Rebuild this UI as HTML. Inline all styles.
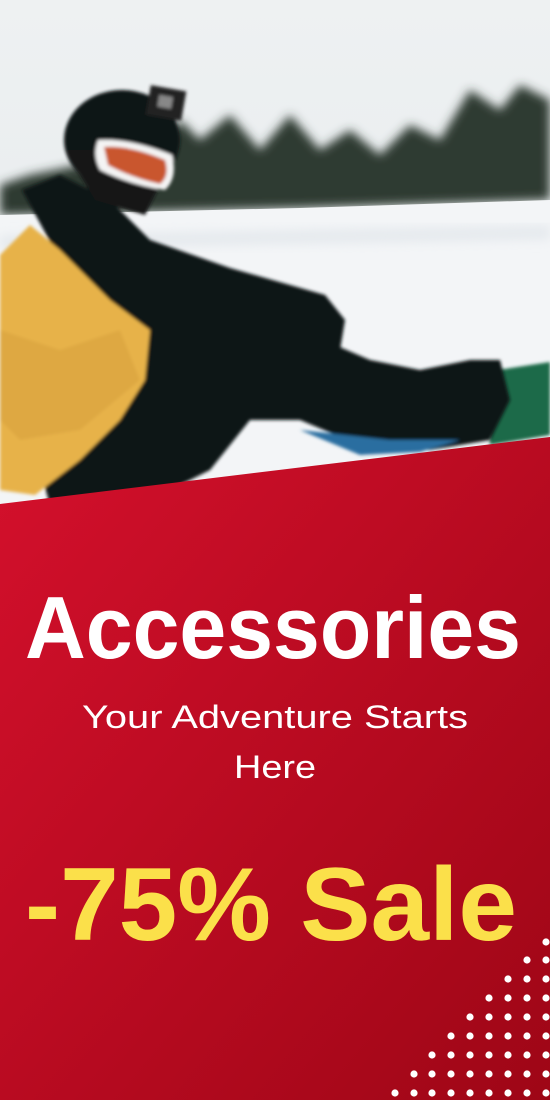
<!DOCTYPE html>
<html><head><meta charset="utf-8"><style>
html,body{margin:0;padding:0;width:550px;height:1100px;overflow:hidden;background:#fff}
svg{display:block}
</style></head><body>
<svg width="550" height="1100" viewBox="0 0 550 1100" xmlns="http://www.w3.org/2000/svg">
<defs>
<linearGradient id="sky" x1="0" y1="0" x2="0" y2="1">
<stop offset="0" stop-color="#eef1f2"/><stop offset="1" stop-color="#e4e9ec"/></linearGradient>
<linearGradient id="red" x1="0" y1="0" x2="1" y2="1">
<stop offset="0" stop-color="#d4102c"/><stop offset="1" stop-color="#9e0616"/></linearGradient>
<filter id="bl"><feGaussianBlur stdDeviation="5"/></filter>
<filter id="bl2"><feGaussianBlur stdDeviation="1.5"/></filter>
</defs>
<rect width="550" height="520" fill="url(#sky)"/>
<g filter="url(#bl)" fill="#2f3b30">
<path d="M0 212 L0 185 L30 175 L80 165 L140 170 L180 120 L200 140 L230 115 L260 150 L290 115 L320 150 L350 130 L380 155 L410 125 L440 140 L470 90 L500 110 L520 85 L550 100 L550 200 L300 208 L0 215 Z"/>
</g>
<path d="M0 215 L300 208 L550 200 L550 520 L0 520 Z" fill="#f3f5f7"/>
<path d="M0 235 L550 225 L550 240 L0 250 Z" fill="#e6eaee" filter="url(#bl)"/>
<path d="M485 372 L550 362 L550 435 L490 445 Z" fill="#1f6a4a" filter="url(#bl2)"/>
<g filter="url(#bl2)">
<!-- pants -->
<path d="M130 330 L240 310 L300 330 L370 360 L420 370 L470 360 L500 360 L510 400 L490 440 L430 450 L360 445 L300 420 L250 420 L210 470 L150 500 L50 505 L40 470 L70 380 Z" fill="#111416"/>
<path d="M300 430 L390 440 L460 440 L420 452 L360 455 Z" fill="#2a6ea0"/>
<!-- black arm/jacket -->
<path d="M22 190 L60 175 L110 200 L150 240 L230 268 L290 285 L325 295 L345 320 L340 350 L320 352 L280 330 L200 322 L150 330 L120 320 L60 260 Z" fill="#0f1214"/>
<!-- yellow jacket -->
<path d="M0 255 L30 225 L60 250 L110 300 L150 330 L145 380 L120 420 L80 460 L35 495 L0 490 Z" fill="#e7b24a"/>
<path d="M0 330 L60 350 L120 330 L140 380 L80 430 L20 440 L0 420 Z" fill="#d9a23d" opacity=".6"/>
<!-- helmet -->
<ellipse cx="122" cy="140" rx="58" ry="50" fill="#101214"/>
<path d="M65 150 L95 200 L145 215 L160 185 L140 150 Z" fill="#141618"/>
<path d="M98 140 Q130 138 172 155 Q178 178 165 190 Q130 185 100 170 Q92 155 98 140 Z" fill="#f4f4f4"/>
<path d="M104 147 Q130 145 165 160 Q170 176 160 184 Q132 178 108 165 Z" fill="#c9562e"/>
<rect x="148" y="88" width="36" height="30" fill="#222" transform="rotate(10 166 103)"/>
<rect x="158" y="96" width="14" height="12" fill="#888" transform="rotate(10 166 103)"/>
</g>
<path d="M0 504 L550 437 L550 1100 L0 1100 Z" fill="url(#red)"/>
<text x="273" y="658" text-anchor="middle" font-family="Liberation Sans, sans-serif" font-weight="bold" font-size="88" fill="#fff" textLength="496" lengthAdjust="spacingAndGlyphs">Accessories</text>
<text x="275" y="728" text-anchor="middle" font-family="Liberation Sans, sans-serif" font-size="32" fill="#fff" textLength="386" lengthAdjust="spacingAndGlyphs">Your Adventure Starts</text>
<text x="275" y="778" text-anchor="middle" font-family="Liberation Sans, sans-serif" font-size="32" fill="#fff" textLength="82" lengthAdjust="spacingAndGlyphs">Here</text>
<text x="271" y="940" text-anchor="middle" font-family="Liberation Sans, sans-serif" font-weight="bold" font-size="104" fill="#fbe04a" textLength="492" lengthAdjust="spacingAndGlyphs">-75% Sale</text>
<g fill="#fff">
<circle cx="546" cy="942" r="3.6"/>
<circle cx="527" cy="960" r="3.6"/><circle cx="546" cy="960" r="3.6"/>
<circle cx="508" cy="979" r="3.6"/><circle cx="527" cy="979" r="3.6"/><circle cx="546" cy="979" r="3.6"/>
<circle cx="489" cy="998" r="3.6"/><circle cx="508" cy="998" r="3.6"/><circle cx="527" cy="998" r="3.6"/><circle cx="546" cy="998" r="3.6"/>
<circle cx="470" cy="1017" r="3.6"/><circle cx="489" cy="1017" r="3.6"/><circle cx="508" cy="1017" r="3.6"/><circle cx="527" cy="1017" r="3.6"/><circle cx="546" cy="1017" r="3.6"/>
<circle cx="451" cy="1036" r="3.6"/><circle cx="470" cy="1036" r="3.6"/><circle cx="489" cy="1036" r="3.6"/><circle cx="508" cy="1036" r="3.6"/><circle cx="527" cy="1036" r="3.6"/><circle cx="546" cy="1036" r="3.6"/>
<circle cx="432" cy="1055" r="3.6"/><circle cx="451" cy="1055" r="3.6"/><circle cx="470" cy="1055" r="3.6"/><circle cx="489" cy="1055" r="3.6"/><circle cx="508" cy="1055" r="3.6"/><circle cx="527" cy="1055" r="3.6"/><circle cx="546" cy="1055" r="3.6"/>
<circle cx="414" cy="1074" r="3.6"/><circle cx="432" cy="1074" r="3.6"/><circle cx="451" cy="1074" r="3.6"/><circle cx="470" cy="1074" r="3.6"/><circle cx="489" cy="1074" r="3.6"/><circle cx="508" cy="1074" r="3.6"/><circle cx="527" cy="1074" r="3.6"/><circle cx="546" cy="1074" r="3.6"/>
<circle cx="395" cy="1093" r="3.6"/><circle cx="414" cy="1093" r="3.6"/><circle cx="432" cy="1093" r="3.6"/><circle cx="451" cy="1093" r="3.6"/><circle cx="470" cy="1093" r="3.6"/><circle cx="489" cy="1093" r="3.6"/><circle cx="508" cy="1093" r="3.6"/><circle cx="527" cy="1093" r="3.6"/><circle cx="546" cy="1093" r="3.6"/>
</g>
</svg>
</body></html>
